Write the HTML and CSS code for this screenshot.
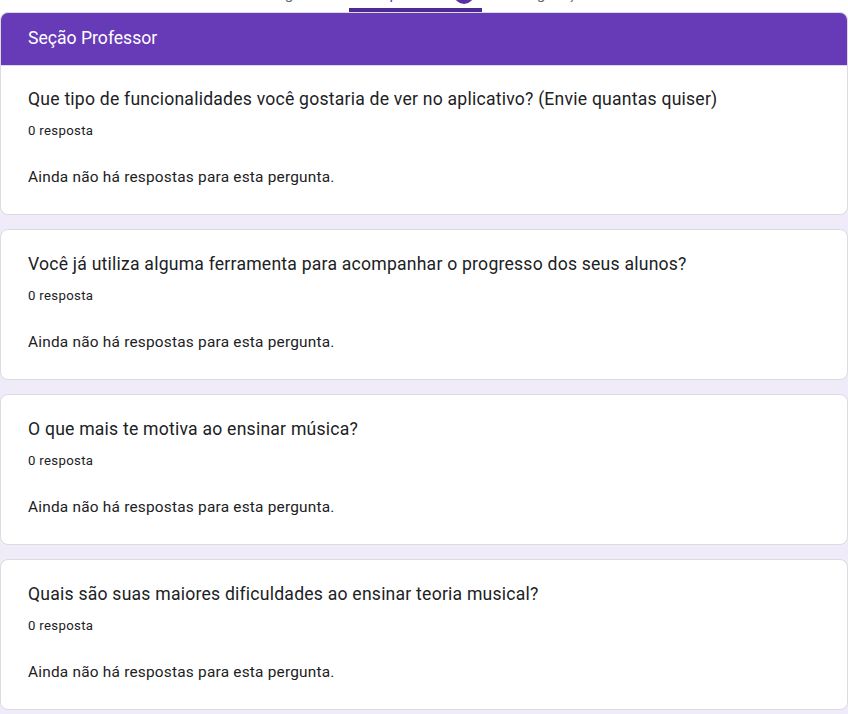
FILE: index.html
```html
<!DOCTYPE html>
<html lang="pt-BR">
<head>
<meta charset="utf-8">
<title>Respostas</title>
<link rel="stylesheet" href="styles.css">
</head>
<body>
<nav class="tabs">
  <div class="tab tab-first"><span class="tab-label">Perguntas</span></div>
  <div class="tab tab-active"><span class="tab-label">Respostas</span><span class="badge">0</span></div>
  <div class="tab tab-last"><span class="tab-label">Configurações</span></div>
</nav>
<main class="page">
  <div class="section-wrap">
    <header class="section-head">Seção Professor</header>
  </div>
  <article class="card card-first">
    <h2 class="q-title">Que tipo de funcionalidades você gostaria de ver no aplicativo? (Envie quantas quiser)</h2>
    <p class="q-count">0 resposta</p>
    <p class="q-empty">Ainda não há respostas para esta pergunta.</p>
  </article>
  <article class="card">
    <h2 class="q-title">Você já utiliza alguma ferramenta para acompanhar o progresso dos seus alunos?</h2>
    <p class="q-count">0 resposta</p>
    <p class="q-empty">Ainda não há respostas para esta pergunta.</p>
  </article>
  <article class="card">
    <h2 class="q-title">O que mais te motiva ao ensinar música?</h2>
    <p class="q-count">0 resposta</p>
    <p class="q-empty">Ainda não há respostas para esta pergunta.</p>
  </article>
  <article class="card">
    <h2 class="q-title">Quais são suas maiores dificuldades ao ensinar teoria musical?</h2>
    <p class="q-count">0 resposta</p>
    <p class="q-empty">Ainda não há respostas para esta pergunta.</p>
  </article>
</main>
</body>
</html>
```

FILE: styles.css
```css
html, body {
  margin: 0;
  padding: 0;
}
body {
  background: #f0ebf8;
  font-family: Roboto, "Liberation Sans", Arial, sans-serif;
  color: #202124;
  min-height: 714px;
}

.tabs {
  height: 12px;
  overflow: hidden;
  background: #fff;
  display: flex;
  align-items: flex-end;
}
.tab {
  display: flex;
  align-items: center;
  gap: 18px;
  border-bottom: 4px solid transparent;
  color: #5f6368;
  font-size: 15.4px;
  line-height: 22px;
  flex: none;
}
.tab-label {
  display: block;
  margin-bottom: 3px;
}
.tab-first {
  margin-left: 262px;
  width: 87px;
}
.tab-active {
  width: 118px;
  padding-left: 15px;
  border-bottom-color: #4e2a94;
  border-radius: 3px 3px 0 0;
  color: #673ab7;
}
.tab-last {
  margin-left: 19px;
}
.badge {
  width: 20px;
  height: 20px;
  border-radius: 50%;
  background: #5b2fa3;
  color: #fff;
  font-size: 12px;
  display: flex;
  align-items: center;
  justify-content: center;
  margin-bottom: 4px;
}

.page {
  display: flex;
  flex-direction: column;
  gap: 14px;
}
.section-wrap {
  background: #fff;
  margin-bottom: -14px;
}
.section-head {
  background: #673ab7;
  color: #fff;
  font-size: 17.6px;
  line-height: 24px;
  height: 53px;
  box-sizing: border-box;
  padding: 13px 27px;
  border: 1px solid #dadce0;
  border-bottom: 0;
  border-radius: 8px 8px 0 0;
}

.card {
  background: #fff;
  border: 1px solid #dadce0;
  border-radius: 8px;
  padding: 22px 27px 27px;
}
.card-first {
  border-top-color: #ddd6ee;
  border-radius: 0 0 8px 8px;
  padding-top: 21px;
}
.q-title {
  margin: 0;
  font-size: 17.6px;
  font-weight: 400;
  line-height: 24px;
  letter-spacing: 0.22px;
  color: #202124;
}
.q-count {
  margin: 12px 0 0;
  font-size: 13.2px;
  line-height: 16px;
  letter-spacing: 0.33px;
  color: #202124;
}
.q-empty {
  margin: 28px 0 0;
  font-size: 15.4px;
  line-height: 20px;
  letter-spacing: 0.22px;
  color: #202124;
}
```
